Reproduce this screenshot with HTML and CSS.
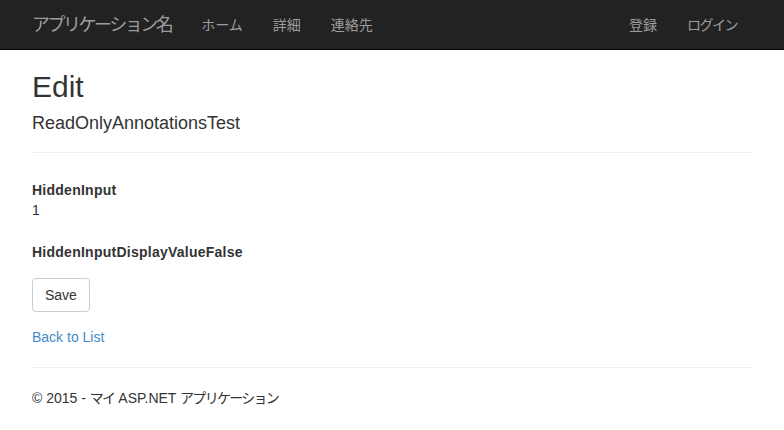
FILE: index.html
```html
<!doctype html>
<html lang="ja">
<head>
<meta charset="UTF-8">
<title>Edit - マイ ASP.NET アプリケーション</title>
<link rel="stylesheet" href="styles.css">
</head>
<body>
	<div class="navbar">
		<div class="container nav-inner">
			<a class="brand" href="#">アプリケーション名</a>
			<ul class="nav">
				<li><a href="#">ホーム</a></li>
				<li><a href="#">詳細</a></li>
				<li><a href="#">連絡先</a></li>
			</ul>
			<ul class="nav nav-right">
				<li><a href="#">登録</a></li>
				<li><a href="#" class="tight">ログイン</a></li>
			</ul>
		</div>
	</div>

	<div class="container body-content">
		<h2>Edit</h2>

		<form class="form">
			<h4>ReadOnlyAnnotationsTest</h4>
			<hr>

			<div class="field first">
				<div class="label">HiddenInput</div>
				<div class="value">1</div>
			</div>

			<div class="field">
				<div class="label">HiddenInputDisplayValueFalse</div>
			</div>

			<div class="field">
				<input type="submit" value="Save" class="btn">
			</div>
		</form>

		<div class="back">
			<a href="#">Back to List</a>
		</div>

		<hr>
		<footer>
			<p>&copy; 2015 - <span class="ja">マイ</span> ASP.NET <span class="ja">アプリケーション</span></p>
		</footer>
	</div>
</body>
</html>
```

FILE: styles.css
```css
html, body { margin:0; padding:0; }
body { font:14px/20px "Liberation Sans", Arial, "Noto Sans CJK JP", sans-serif; color:#333; background:#fff; }
a { text-decoration:none; }
ul { list-style:none; margin:0; padding:0; }

.container { width:720px; margin:0 auto; }

/* 上部ナビ */
.navbar { height:50px; background:#222; border-bottom:1px solid #080808; box-sizing:border-box; }
.nav-inner { display:flex; align-items:center; height:50px; }
.brand { color:#9d9d9d; font-size:18px; line-height:20px; padding:15px 15px 15px 0; letter-spacing:-2.5px; }
.nav { display:flex; }
.nav a { display:block; color:#9d9d9d; padding:15px; line-height:20px; }
.nav a.tight { letter-spacing:-1.5px; }
.nav-right { margin-left:auto; margin-right:0; }

/* 本文 */
h2 { font-size:30px; font-weight:500; line-height:33px; margin:20px 0 10px; }
h4 { font-size:18px; font-weight:500; line-height:20px; margin:10px 0 0; }
hr { border:0; border-top:1px solid #eee; margin:19px 0 20px; height:0; }

.field { margin-bottom:22px; }
.field.first { padding-top:7px; }
.label { font-weight:bold; letter-spacing:0.25px; }

.btn { font:14px/20px "Liberation Sans", Arial, sans-serif; color:#333; background:#fff; border:1px solid #ccc; border-radius:4px; padding:6px 12px; margin-top:-6px; }
.field:last-child { margin-bottom:15px; }

.back a { color:#428bca; }
.back + hr { margin-top:20px; }

footer p { margin:0; }
footer .ja { letter-spacing:-1.7px; }
```
